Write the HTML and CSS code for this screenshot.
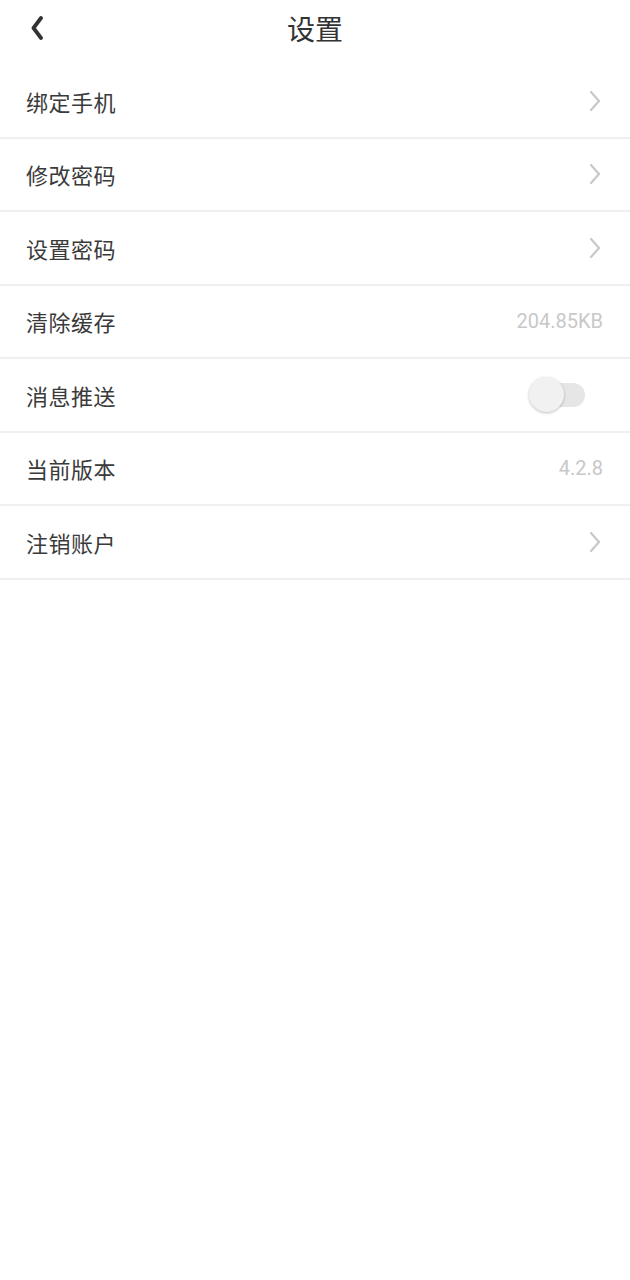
FILE: index.html
```html
<!DOCTYPE html>
<html lang="zh">
<head>
    <meta charset="UTF-8">
    <meta name="viewport" content="width=device-width, initial-scale=1.0">
    <title>设置</title>
    <link rel="stylesheet" href="styles.css">
</head>
<body>
    <div class="header">
        <span class="back">
            <svg width="14" height="24" viewBox="0 0 14 24"><path d="M11 2 L3.5 12 L11 22" fill="none" stroke="#333" stroke-width="3.8" stroke-linecap="round" stroke-linejoin="round"/></svg>
        </span>
        <h2 class="title">设置</h2>
    </div>

    <ul class="list">
        <li class="row">
            <span class="label">绑定手机</span>
            <span class="arrow"><svg width="12" height="22" viewBox="0 0 12 22"><path d="M2 2 L10 11 L2 20" fill="none" stroke="#c8c8c8" stroke-width="2.2" stroke-linecap="round" stroke-linejoin="round"/></svg></span>
        </li>
        <li class="row">
            <span class="label">修改密码</span>
            <span class="arrow"><svg width="12" height="22" viewBox="0 0 12 22"><path d="M2 2 L10 11 L2 20" fill="none" stroke="#c8c8c8" stroke-width="2.2" stroke-linecap="round" stroke-linejoin="round"/></svg></span>
        </li>
        <li class="row">
            <span class="label">设置密码</span>
            <span class="arrow"><svg width="12" height="22" viewBox="0 0 12 22"><path d="M2 2 L10 11 L2 20" fill="none" stroke="#c8c8c8" stroke-width="2.2" stroke-linecap="round" stroke-linejoin="round"/></svg></span>
        </li>
        <li class="row">
            <span class="label">清除缓存</span>
            <span class="value">204.85KB</span>
        </li>
        <li class="row">
            <span class="label">消息推送</span>
            <span class="switch"><span class="knob"></span></span>
        </li>
        <li class="row">
            <span class="label">当前版本</span>
            <span class="value">4.2.8</span>
        </li>
        <li class="row">
            <span class="label">注销账户</span>
            <span class="arrow"><svg width="12" height="22" viewBox="0 0 12 22"><path d="M2 2 L10 11 L2 20" fill="none" stroke="#c8c8c8" stroke-width="2.2" stroke-linecap="round" stroke-linejoin="round"/></svg></span>
        </li>
    </ul>
</body>
</html>
```

FILE: styles.css
```css
body {
    font-family: "Noto Sans CJK SC", Roboto, sans-serif;
    margin: 0;
    background-color: #fff;
    color: #333;
}
.header {
    position: relative;
    height: 65px;
    display: flex;
    align-items: center;
    justify-content: center;
}
.back {
    position: absolute;
    left: 30px;
    top: 16px;
    display: flex;
}
.title {
    margin: 0;
    margin-top: -10px;
    font-size: 28px;
    font-weight: normal;
    color: #333;
}
.list {
    list-style: none;
    margin: 0;
    padding: 0;
}
.row {
    height: 71.5px;
    display: flex;
    align-items: center;
    justify-content: space-between;
    padding: 0 27px 0 26px;
    border-bottom: 2px solid #f0f0f0;
}
.label {
    font-size: 22px;
    letter-spacing: 0.5px;
    color: #3a3a3a;
}
.arrow {
    display: flex;
    margin-right: 2px;
}
.value {
    font-family: Roboto, sans-serif;
    font-size: 20px;
    color: #c8c8c8;
}
.switch {
    position: relative;
    width: 54px;
    height: 24px;
    margin-right: 18px;
    border-radius: 12px;
    background-color: #e6e6e6;
}
.knob {
    position: absolute;
    left: -2px;
    top: -6px;
    width: 35px;
    height: 35px;
    border-radius: 50%;
    background-color: #f1f1f1;
    box-shadow: 0 1px 3px rgba(0, 0, 0, 0.25);
}
```
